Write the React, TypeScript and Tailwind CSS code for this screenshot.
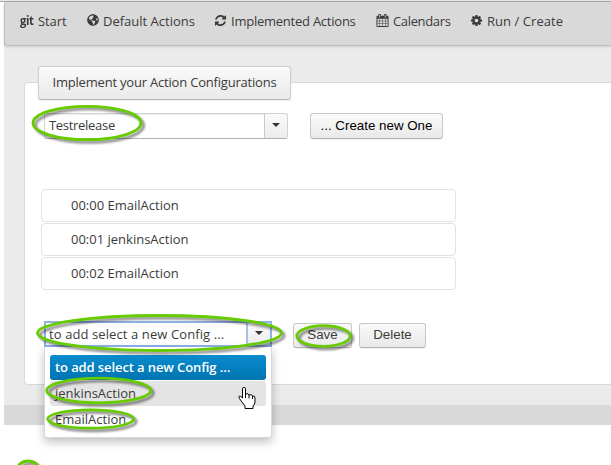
import { ReactNode } from "react";
import { FaGlobeAmericas } from "react-icons/fa";

const COG =
  "M1152 896q0-106-75-181t-181-75-181 75-75 181 75 181 181 75 181-75 75-181zm512-109v222q0 12-8 23t-20 13l-185 28q-19 54-39 91 35 50 107 138 10 12 10 25t-9 23q-27 37-99 108t-94 71q-12 0-26-9l-138-108q-44 23-91 38-16 136-29 186-7 28-36 28h-222q-14 0-24.500-8.500t-11.500-21.500l-28-184q-49-16-90-37l-141 107q-10 9-25 9-14 0-25-11-126-114-165-168-7-10-7-23 0-12 8-23 15-21 51-66.500t54-70.500q-27-50-41-99l-183-27q-13-2-21-12.500t-8-23.500v-222q0-12 8-23t19-13l186-28q14-46 39-92-40-57-107-138-10-12-10-24 0-10 9-23 26-36 98.500-107.500t94.500-71.500q13 0 26 10l138 107q44-23 91-38 16-136 29-186 7-28 36-28h222q14 0 24.500 8.500t11.500 21.500l28 184q49 16 90 37l142-107q9-9 24-9 13 0 25 10 129 119 165 170 7 8 7 22 0 12-8 23-15 21-51 66.500t-54 70.500q26 50 41 98l183 28q13 2 21 12.500t8 23.500z";
const REFRESH =
  "M1639 1056q0 5-1 7-64 268-268 434.500t-478 166.500q-146 0-282.500-55t-243.500-157l-129 129q-19 19-45 19t-45-19-19-45v-448q0-26 19-45t45-19h448q26 0 45 19t19 45-19 45l-137 137q71 66 161 102t187 36q134 0 250-65t186-179q11-17 53-117 8-23 30-23h192q13 0 22.500 9.500t9.500 22.500zm25-800v448q0 26-19 45t-45 19h-448q-26 0-45-19t-19-45 19-45l138-138q-148-137-349-137-134 0-250 65t-186 179q-11 17-53 117-8 23-30 23h-199q-13 0-22.500-9.500t-9.500-22.500v-7q65-268 270-434.500t480-166.500q146 0 284 55.500t245 156.500l130-129q19-19 45-19t45 19 19 45z";
const CALENDAR =
  "M192 1664h288v-288h-288v288zm352 0h320v-288h-320v288zm-352-352h288v-320h-288v320zm352 0h320v-320h-320v320zm-352-384h288v-288h-288v288zm736 736h320v-288h-320v288zm-384-736h320v-288h-320v288zm768 736h288v-288h-288v288zm-384-352h320v-320h-320v320zm-352-864v-288q0-13-9.500-22.500t-22.500-9.500h-64q-13 0-22.500 9.500t-9.500 22.500v288q0 13 9.500 22.500t22.500 9.500h64q13 0 22.500-9.500t9.500-22.500zm736 864h288v-320h-288v320zm-384-384h320v-288h-320v288zm384 0h288v-288h-288v288zm32-480v-288q0-13-9.500-22.500t-22.500-9.500h-64q-13 0-22.500 9.500t-9.500 22.500v288q0 13 9.500 22.500t22.500 9.500h64q13 0 22.500-9.500t9.500-22.500zm384-64v1280q0 52-38 90t-90 38h-1408q-52 0-90-38t-38-90v-1280q0-52 38-90t90-38h128v-96q0-66 47-113t113-47h64q66 0 113 47t47 113v96h384v-96q0-66 47-113t113-47h64q66 0 113 47t47 113v96h128q52 0 90 38t38 90z";

function Glyph({ d }: { d: string }) {
  return (
    <svg viewBox="0 0 1792 1792" className="size-[13px] shrink-0" fill="currentColor">
      <path d={d} />
    </svg>
  );
}

function NavItem({ icon, label, className }: { icon: ReactNode; label: string; className: string }) {
  return (
    <a className={`flex shrink-0 items-center whitespace-nowrap ${className}`}>
      <span className="-mt-0.5 mr-1 flex shrink-0">{icon}</span>
      <span>{label}</span>
    </a>
  );
}

function Caret() {
  return <span className="border-x-4 border-t-4 border-x-transparent border-t-[#333]" />;
}

function Button({ children, className }: { children: ReactNode; className: string }) {
  return (
    <button
      className={`flex shrink-0 items-center justify-center whitespace-nowrap rounded-[3px] border border-[#c8c8c8] border-b-[#b3b3b3] bg-gradient-to-b from-[#fafafa] to-[#e9e9e9] shadow-[0_1px_1px_rgba(0,0,0,0.06)] ${className}`}
    >
      {children}
    </button>
  );
}

function Ring({ cx, cy, rx, ry }: { cx: number; cy: number; rx: number; ry: number }) {
  return (
    <g fill="none">
      <ellipse cx={cx + 2.5} cy={cy + 2.5} rx={rx} ry={ry} stroke="#000" strokeOpacity="0.45" strokeWidth="3" filter="url(#soft)" />
      <ellipse cx={cx} cy={cy} rx={rx} ry={ry} stroke="#66cc00" strokeWidth="2.8" />
    </g>
  );
}

const actions = ["00:00 EmailAction", "00:01 jenkinsAction", "00:02 EmailAction"];

export default function App() {
  return (
    <div className="relative h-[465px] w-[611px] overflow-hidden bg-white font-['Open_Sans','Noto_Sans',sans-serif] text-[13px] leading-[18px] text-[#3b3b3b]">
      <div className="h-[2px] border-b border-[#a9a9a9] bg-[#e6e6e6]" />
      <div className="ml-1 h-[403px] bg-[#ebebeb]">
        <nav className="flex h-11 items-start rounded-l-[3px] border-b border-l border-[#bcbcbc] bg-[#d9d9d9] pl-[15px] pt-2.5 shadow-[0_1px_3px_rgba(0,0,0,0.12)]">
          <NavItem
            className="w-[67px] tracking-[-0.1px]"
            icon={
              <span className="w-[14px] origin-left scale-x-[0.86] text-[13px] font-bold leading-[16px] tracking-[-0.4px]">
                git
              </span>
            }
            label="Start"
          />
          <NavItem className="w-[127px]" icon={<FaGlobeAmericas className="size-3" />} label="Default Actions" />
          <NavItem className="w-[162px] tracking-[-0.24px]" icon={<Glyph d={REFRESH} />} label="Implemented Actions" />
          <NavItem className="w-[94px] tracking-[-0.35px]" icon={<Glyph d={CALENDAR} />} label="Calendars" />
          <NavItem className="tracking-[0.05px]" icon={<Glyph d={COG} />} label="Run / Create" />
        </nav>
        <div className="pl-5 pt-9">
          <section className="h-[303px] rounded-l-[4px] border border-r-0 border-[#d9d9d9] bg-white">
            <div className="-mt-[17px] ml-[13px] flex h-[34px] w-[253px] items-center justify-center whitespace-nowrap rounded-[3px] border border-[#cfcfcf] border-b-[#b8b8b8] bg-gradient-to-b from-[#fafafa] to-[#e9e9e9] pb-0.5 tracking-[-0.2px] shadow-[0_1px_2px_rgba(0,0,0,0.08)]">
              Implement your Action Configurations
            </div>
            <div className="ml-[19px] mt-[13px] flex items-start">
              <div className="flex h-[26px] w-[244px] rounded-[3px] border border-[#d2d2d2] border-b-[#b0b0b0] shadow-[inset_0_1px_1px_rgba(0,0,0,0.08)]">
                <span className="flex-1 pl-1 pt-0.5 tracking-[-0.3px]">Testrelease</span>
                <span className="flex w-[23px] items-center justify-center rounded-r-[3px] border-l border-[#c9c9c9] bg-gradient-to-b from-[#fafafa] to-[#ececec] pb-0.5">
                  <Caret />
                </span>
              </div>
              <Button className="ml-[22px] h-[26px] w-[133px] font-['Liberation_Sans',Arial,sans-serif] text-[13.33px] text-black">
                ... Create new One
              </Button>
            </div>
            <ul className="ml-4 mt-[50px] flex w-[415px] flex-col gap-px">
              {actions.map((a) => (
                <li key={a} className="flex h-[33px] items-center rounded-[4px] border border-[#e2e2e2] pb-0.5 pl-[29px]">
                  {a}
                </li>
              ))}
            </ul>
            <div className="ml-[19px] mt-[31px] flex items-start">
              <div className="flex h-[26px] w-[228px] whitespace-nowrap border-2 border-[#8fb1e8]">
                <span className="flex-1 pl-[3px] pt-0.5 tracking-[0.1px]">to add select a new Config ...</span>
                <span className="flex w-[24px] items-center justify-center border-l-2 border-[#a7c0ea] bg-gradient-to-b from-[#fafafa] to-[#ececec] pb-0.5">
                  <Caret />
                </span>
              </div>
              <Button className="ml-[21px] mt-0.5 h-[25px] w-[59px] pb-0.5 font-['Liberation_Sans',Arial,sans-serif] text-[13.33px]">
                Save
              </Button>
              <Button className="ml-[7px] mt-0.5 h-[25px] w-[67px] pb-0.5 font-['Liberation_Sans',Arial,sans-serif] text-[13.33px]">
                Delete
              </Button>
            </div>
          </section>
        </div>
      </div>
      <div className="ml-1 h-5 bg-[#d9d9d9]" />

      <div className="absolute left-[44px] top-[347px] flex h-[91px] w-[228px] flex-col gap-px whitespace-nowrap rounded-b-[3px] border border-t-0 border-[#d8d8d8] bg-white px-[5px] pt-2 shadow-[0_4px_10px_rgba(0,0,0,0.25)]">
        <div className="h-[25px] rounded-[3px] bg-gradient-to-b from-[#0a8ccf] to-[#0074b0] pl-[5px] pt-[3px] font-semibold tracking-[-0.1px] text-white">
          to add select a new Config ...
        </div>
        <div className="h-[25px] rounded-[3px] bg-[#e4e4e4] pl-[5px] pt-[3px]">jenkinsAction</div>
        <div className="h-[25px] pl-[5px] pt-[3px]">EmailAction</div>
      </div>

      <svg className="pointer-events-none absolute inset-0" width="611" height="465">
        <defs>
          <filter id="soft" x="-20%" y="-30%" width="140%" height="160%">
            <feGaussianBlur stdDeviation="1.3" />
          </filter>
        </defs>
        <Ring cx={87} cy={123} rx={54} ry={16.7} />
        <Ring cx={159.5} cy={333} rx={122} ry={17.5} />
        <Ring cx={323.5} cy={336} rx={26.7} ry={10.3} />
        <Ring cx={98.700} cy={390.5} rx={52} ry={12.3} />
        <Ring cx={90.700} cy={419} rx={43} ry={9.2} />
        <Ring cx={28.2} cy={471} rx={11.5} ry={10} />
        <path
          d="M242.500 388.500q0-1 1.500-1t1.500 1v5.500q3-1 3.500 1 3-1 3.500 1 2.500-.5 2.500 2v4q0 2-2 4v2.500h-8v-2.500l-3-4q-3.500-4-3-5.500t3.500 1.500z"
          fill="#fff"
          stroke="#000"
        />
        <path d="M245.500 393v5M249 395v3.500M252.500 396v3" stroke="#000" fill="none" />
      </svg>
    </div>
  );
}
